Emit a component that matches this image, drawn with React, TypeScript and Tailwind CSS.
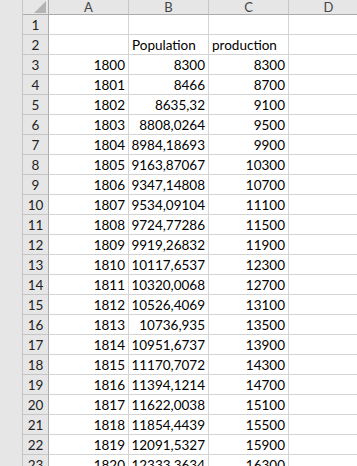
const rows: [string, string, string][] = [
  ["", "", ""],
  ["", "Population", "production"],
  ["1800", "8300", "8300"],
  ["1801", "8466", "8700"],
  ["1802", "8635,32", "9100"],
  ["1803", "8808,0264", "9500"],
  ["1804", "8984,18693", "9900"],
  ["1805", "9163,87067", "10300"],
  ["1806", "9347,14808", "10700"],
  ["1807", "9534,09104", "11100"],
  ["1808", "9724,77286", "11500"],
  ["1809", "9919,26832", "11900"],
  ["1810", "10117,6537", "12300"],
  ["1811", "10320,0068", "12700"],
  ["1812", "10526,4069", "13100"],
  ["1813", "10736,935", "13500"],
  ["1814", "10951,6737", "13900"],
  ["1815", "11170,7072", "14300"],
  ["1816", "11394,1214", "14700"],
  ["1817", "11622,0038", "15100"],
  ["1818", "11854,4439", "15500"],
  ["1819", "12091,5327", "15900"],
  ["1820", "12333,3634", "16300"],
];

const font = "font-['Lato','Liberation_Sans',sans-serif]";

function Cell({ value, label }: { value: string; label?: boolean }) {
  return (
    <div
      className={`flex h-[20px] w-[80px] shrink-0 items-end border-r border-b border-[#d4d4d4] px-[3px] pb-[2px] text-[13.5px] leading-none text-black ${
        label ? "justify-start" : "justify-end"
      }`}
    >
      {value}
    </div>
  );
}

export default function App() {
  return (
    <div className={`flex h-[466px] w-[357px] overflow-hidden bg-white ${font}`}>
      <div className="w-[23px] shrink-0 border-r border-[#c6c6c6] bg-[#e6e6e6]" />
      <div className="flex flex-col">
        <div className="flex h-[15px] shrink-0">
          <div className="relative h-[15px] w-[26px] shrink-0 border-r border-b border-[#ababab] bg-[#e6e6e6]">
            <div className="absolute right-[2px] bottom-[1px] h-0 w-0 border-b-[12px] border-l-[12px] border-b-[#b4b4b4] border-l-transparent" />
          </div>
          {["A", "B", "C", "D"].map((c) => (
            <div
              key={c}
              className="flex h-[15px] w-[80px] shrink-0 items-center justify-center border-r border-b border-r-[#c6c6c6] border-b-[#ababab] bg-[#e6e6e6] text-[13px] leading-none text-[#444]"
            >
              {c}
            </div>
          ))}
        </div>
        {rows.map((r, i) => (
          <div key={i} className="flex shrink-0">
            <div className="flex h-[20px] w-[26px] shrink-0 items-end justify-center border-r border-b border-r-[#ababab] border-b-[#c6c6c6] bg-[#e6e6e6] pb-[2px] text-[13.5px] leading-none text-[#222]">
              {i + 1}
            </div>
            <Cell value={r[0]} />
            <Cell value={r[1]} label={i === 1} />
            <Cell value={r[2]} label={i === 1} />
            <Cell value="" />
          </div>
        ))}
      </div>
    </div>
  );
}
